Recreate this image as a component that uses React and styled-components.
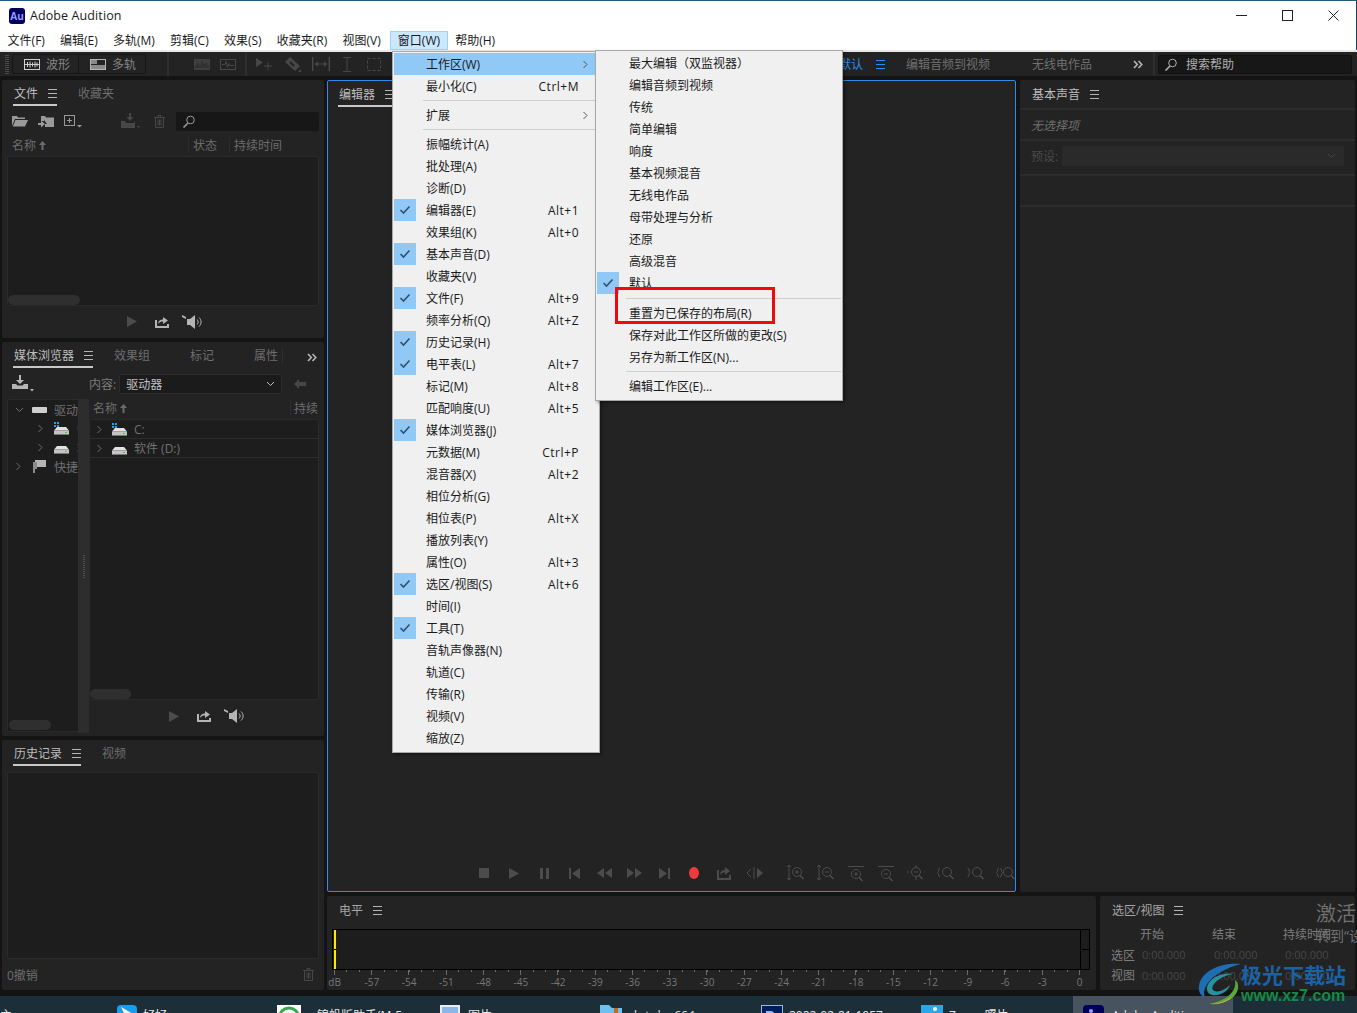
import React from 'react';
import styled, { createGlobalStyle } from 'styled-components';

const GlobalStyle = createGlobalStyle`
  html, body {
    margin: 0;
    padding: 0;
    background: #141414;
  }
  * {
    box-sizing: border-box;
  }
`;

const FONT = '"Open Sans", "Noto Sans CJK SC", sans-serif';

const Page = styled.div`
  position: relative;
  width: 1357px;
  height: 1013px;
  overflow: hidden;
  display: flex;
  flex-direction: column;
  background: #141414;
  font-family: ${FONT};
  font-size: 12px;
  color: #7d7d7d;
`;

const TitleBar = styled.div`
  height: 30px;
  flex: none;
  display: flex;
  align-items: center;
  background: #fff;
  border-top: 1px solid #1f5b7d;
  border-right: 1px solid #1b3f66;
  padding-left: 9px;
  color: #1a1a1a;
`;

const AuLogo = styled.span`
  width: 16px;
  height: 16px;
  border-radius: 3px;
  background: #00005b;
  color: #9a9aff;
  font-size: 10px;
  font-weight: 700;
  line-height: 16px;
  text-align: center;
`;

const TitleText = styled.span`
  margin-left: 5px;
  font-size: 12.5px;
  letter-spacing: 0.1px;
`;

const WinControls = styled.div`
  margin-left: auto;
  display: flex;
  align-items: center;
  color: #222;
`;

const WinButton = styled.span`
  width: 46px;
  height: 29px;
  display: flex;
  align-items: center;
  justify-content: center;
`;

const MenuBar = styled.div`
  height: 20px;
  flex: none;
  display: flex;
  align-items: flex-end;
  background: #fff;
  color: #1a1a1a;
  border-right: 1px solid #1b3f66;
`;

const MenuItem = styled.span`
  height: 19px;
  line-height: 19px;
  padding: 0 7.6px;
  margin-left: ${p => (p.$open ? 2 : 0)}px;
  background: ${p => (p.$open ? '#cce8ff' : 'transparent')};
  box-shadow: ${p => (p.$open ? 'inset 0 0 0 1px #99d1ff' : 'none')};
`;

const Toolbar = styled.div`
  height: 26px;
  flex: none;
  display: flex;
  align-items: center;
  background: #232323;
  border-top: 2px solid #e8e8e8;
  padding-left: 5px;
`;

const Grip = styled.span`
  width: 4px;
  height: 20px;
  margin-right: 3px;
  background: repeating-linear-gradient(0deg, #4a4a4a 0 1px, transparent 1px 2px);
`;

const ModeGroup = styled.div`
  display: flex;
  height: 20px;
  border: 1px solid #161616;
  border-radius: 2px;
`;

const ModeButton = styled.span`
  display: flex;
  align-items: center;
  gap: 6px;
  width: ${p => p.$w}px;
  padding-left: ${p => p.$pl}px;
  color: #858585;
  border-left: ${p => (p.$divide ? '1px solid #161616' : 'none')};
`;

const ToolSep = styled.span`
  width: ${p => p.$w || 2}px;
  height: ${p => p.$h || 24}px;
  margin: 0 ${p => p.$r || 0}px ${p => p.$b || 0}px ${p => p.$l || 0}px;
  background: #2e2e2e;
`;

const ToolSlot = styled.span`
  width: ${p => p.$w || 26}px;
  display: flex;
  justify-content: center;
  align-items: center;
  color: #474747;
`;

const WorkspaceGroup = styled.div`
  margin-left: auto;
  display: flex;
  align-items: center;
  height: 100%;
  padding-right: 5px;
`;

const Workspace = styled.span`
  margin-left: ${p => p.$ml || 0}px;
  margin-right: ${p => p.$mr}px;
  color: ${p => (p.$active ? '#2d8ceb' : '#707070')};
  white-space: nowrap;
`;

const SearchBox = styled.div`
  width: 194px;
  height: 19px;
  margin-left: 3px;
  display: flex;
  align-items: center;
  gap: 8px;
  padding-left: 5px;
  background: #171717;
  border: 1px solid #111;
  border-radius: 2px;
  color: #b0b0b0;
`;

const Body = styled.div`
  flex: 1;
  min-height: 0;
  display: flex;
  gap: 3px;
  padding: 4px 2px 6px;
`;

const LeftColumn = styled.div`
  width: 322px;
  flex: none;
  display: flex;
  flex-direction: column;
  gap: 4px;
`;

const RightArea = styled.div`
  flex: 1;
  min-width: 0;
  display: flex;
  flex-direction: column;
  gap: 4px;
`;

const Row = styled.div`
  display: flex;
  gap: 4px;
  flex: ${p => (p.$grow ? 1 : 'none')};
  min-height: 0;
  height: ${p => (p.$h ? `${p.$h}px` : 'auto')};
`;

const Panel = styled.section`
  width: ${p => (p.$w ? `${p.$w}px` : 'auto')};
  height: ${p => (p.$h ? `${p.$h}px` : 'auto')};
  flex: ${p => (p.$w || p.$h ? 'none' : 1)};
  display: flex;
  flex-direction: column;
  background: #232323;
  border-radius: 2px;
  min-width: 0;
`;

const EditorPanel = styled(Panel)`
  border: 1px solid #2d8ceb;
`;

const TabBar = styled.div`
  height: 26px;
  flex: none;
  display: flex;
  align-items: flex-end;
  padding-left: ${p => p.$pl || 11}px;
`;

const Tab = styled.span`
  height: 24px;
  display: flex;
  align-items: center;
  gap: 10px;
  padding-left: 1px;
  margin-right: ${p => p.$mr || 0}px;
  color: ${p => (p.$active ? '#bdbdbd' : '#6e6e6e')};
  border-bottom: 2px solid ${p => (p.$active ? '#c8c8c8' : 'transparent')};
  white-space: nowrap;
`;

const Burger = styled.i`
  display: block;
  width: 9px;
  height: 9px;
  flex: none;
  background: linear-gradient(
    ${p => p.$color || '#b5b5b5'} 0 1px,
    transparent 1px 4px,
    ${p => p.$color || '#b5b5b5'} 4px 5px,
    transparent 5px 8px,
    ${p => p.$color || '#b5b5b5'} 8px 9px
  );
`;

const FileTools = styled.div`
  height: 30px;
  flex: none;
  display: flex;
  align-items: center;
  padding-left: 10px;
  color: #9a9a9a;
`;

const IconSlot = styled.span`
  width: ${p => p.$w}px;
  flex: none;
  display: flex;
  align-items: center;
  justify-content: ${p => (p.$end ? 'flex-end' : 'flex-start')};
  margin: ${p => p.$m || 0};
  color: ${p => p.$color || 'inherit'};
`;

const SearchField = styled.div`
  width: 143px;
  height: 19px;
  display: flex;
  align-items: center;
  padding-left: 6px;
  background: #171717;
  border-radius: 2px;
  color: #999;
`;

const ListHeader = styled.div`
  height: 20px;
  flex: none;
  display: flex;
  align-items: center;
  padding: 0 0 2px ${p => p.$pl || 10}px;
  color: #6c6c6c;
`;

const HeaderCell = styled.span`
  width: ${p => (p.$w ? `${p.$w}px` : 'auto')};
  display: flex;
  align-items: center;
  gap: 3px;
  height: 16px;
  padding-left: ${p => p.$pl || 0}px;
  border-left: ${p => (p.$divide ? '1px solid #2c2c2c' : 'none')};
  white-space: nowrap;
`;

const ListBox = styled.div`
  margin: ${p => p.$m || '0 5px'};
  height: ${p => (p.$h ? `${p.$h}px` : 'auto')};
  flex: ${p => (p.$h ? 'none' : 1)};
  display: flex;
  flex-direction: column;
  background: #1d1d1d;
  border: 1px solid #2a2a2a;
  border-radius: 2px;
  overflow: hidden;
`;

const Thumb = styled.span`
  display: block;
  width: ${p => p.$w}px;
  height: 10px;
  flex: none;
  margin: auto 0 0;
  border-radius: 5px;
  background: #2f2f2f;
`;

const TransportMini = styled.div`
  height: ${p => p.$h || 32}px;
  flex: none;
  display: flex;
  align-items: center;
  justify-content: center;
  padding: 0 0 1px ${p => p.$pl || 0}px;
  color: #b5b5b5;
`;

const ContentRow = styled.div`
  height: 31px;
  flex: none;
  display: flex;
  align-items: center;
  padding-left: 10px;
  color: #7d7d7d;
  white-space: nowrap;
`;

const SelectBox = styled.div`
  width: ${p => p.$w}px;
  height: 20px;
  flex: none;
  margin-left: 3px;
  padding: 0 6px;
  display: flex;
  align-items: center;
  justify-content: space-between;
  background: #1b1b1b;
  border: 1px solid #2b2b2b;
  border-radius: 2px;
  color: #c0c0c0;
`;

const MediaBody = styled.div`
  height: 334px;
  display: flex;
  flex: none;
`;

const TreePane = styled.div`
  width: 71px;
  margin: 0 0 1px 5px;
  flex: none;
  display: flex;
  flex-direction: column;
  background: #1d1d1d;
  border: 1px solid #2a2a2a;
  border-right: none;
  border-radius: 2px 0 0 2px;
  overflow: hidden;
`;

const TreeRow = styled.div`
  height: 19px;
  flex: none;
  display: flex;
  align-items: center;
  padding-left: ${p => p.$pl}px;
  color: #6e6e6e;
  white-space: nowrap;
`;

const TreeThumb = styled(Thumb)`
  margin: auto 0 1px 1px;
`;

const Splitter = styled.div`
  width: 11px;
  flex: none;
  display: flex;
  align-items: center;
  justify-content: center;
  background: #2d2d2d;
`;

const SplitGrip = styled.span`
  width: 2px;
  height: 24px;
  background: repeating-linear-gradient(0deg, #4c4c4c 0 1px, transparent 1px 2px);
`;

const MediaContent = styled.div`
  flex: 1;
  min-width: 0;
  display: flex;
  flex-direction: column;
`;

const DriveRow = styled.div`
  height: 19px;
  flex: none;
  display: flex;
  align-items: center;
  padding-left: 6px;
  color: #707070;
  border-bottom: 1px solid #2c2c2c;
`;

const HistoryFooter = styled.div`
  height: 31px;
  flex: none;
  display: flex;
  align-items: center;
  justify-content: space-between;
  padding: 0 10px 0 5px;
  color: #6e6e6e;
`;

const EditorBody = styled.div`
  flex: 1;
`;

const EditorTransport = styled.div`
  height: 24px;
  flex: none;
  margin-bottom: 6px;
  display: flex;
  align-items: center;
  padding-left: 10px;
  color: #4c4c4c;
`;

const Dash = styled.span`
  width: 4px;
  height: 1px;
  margin: 7px 131px 0 0;
  background: #5a5a5a;
`;

const TransSlot = styled.span`
  width: ${p => p.$w || 30}px;
  flex: none;
  display: flex;
  justify-content: center;
  color: ${p => p.$color || 'inherit'};
`;

const SoundTitle = styled.div`
  height: 28px;
  flex: none;
  display: flex;
  align-items: center;
  gap: 10px;
  padding-left: 12px;
  color: #bdbdbd;
`;

const SoundRow = styled.div`
  height: ${p => p.$h}px;
  flex: none;
  display: flex;
  align-items: center;
  gap: 4px;
  padding: 0 11px ${p => p.$pb || 0}px;
  border-top: 2px solid #2c2c2c;
  color: ${p => p.$color || '#4a4a4a'};
  font-style: ${p => (p.$italic ? 'italic' : 'normal')};
`;

const PresetBox = styled.div`
  flex: 1;
  height: 20px;
  padding-right: 8px;
  display: flex;
  align-items: center;
  justify-content: flex-end;
  background: #2a2a2a;
  border-radius: 2px;
  color: #444;
`;

const LevelHeader = styled.div`
  height: 28px;
  flex: none;
  display: flex;
  align-items: center;
  gap: 10px;
  padding-left: 12px;
  color: #a5a5a5;
`;

const Meter = styled.div`
  height: 41px;
  margin: 5px 6px 0 5px;
  flex: none;
  display: grid;
  grid-template-columns: 2px 1fr 9px;
  padding-left: 1px;
  background: #1d1d1d;
  border: 1px solid #000;
`;

const PeakLine = styled.span`
  background: linear-gradient(#ffe800 0 19px, #000 19px 20px, #ffe800 20px);
`;

const MeterSide = styled.span`
  grid-column: 3;
  border-left: 1px solid #000;
  background: linear-gradient(transparent 0 19px, #000 19px 20px, transparent 20px);
`;

const Ticks = styled.div`
  height: 5px;
  margin: 0 10px 0 7px;
  flex: none;
  background:
    repeating-linear-gradient(90deg, #6a6a6a 0 1px, transparent 1px 12.417px) 0 0 / 100% 2px no-repeat,
    repeating-linear-gradient(90deg, #6a6a6a 0 1px, transparent 1px 37.25px) 0 0 / 100% 5px no-repeat;
`;

const ScaleRow = styled.div`
  display: flex;
  margin: 0 0 0 -18px;
  padding-left: 7px;
  color: #777;
  font-size: 10px;
  line-height: 14px;
`;

const ScaleLabel = styled.span`
  width: 37.25px;
  flex: none;
  text-align: center;
`;

const SelectionGrid = styled.div`
  display: grid;
  grid-template-columns: 29px 72px 71px 71px;
  grid-auto-rows: 20.5px;
  align-items: center;
  padding-left: 11px;
  color: #7d7d7d;
  white-space: nowrap;
`;

const TimeValue = styled.span`
  padding-left: 2px;
  font-size: 11px;
  color: #464646;
`;

const Taskbar = styled.div`
  height: 17px;
  flex: none;
  display: flex;
  background: #1c2f38;
  overflow: hidden;
  color: #e6e6e6;
`;

const TaskEdge = styled.span`
  width: 107px;
  flex: none;
  padding-top: 13px;
  line-height: 14px;
`;

const TaskItem = styled.div`
  width: ${p => p.$w}px;
  flex: none;
  display: flex;
  align-items: flex-start;
  gap: ${p => p.$gap || 6}px;
  padding: 9px 0 0 10px;
  background: ${p => (p.$active ? '#47545f' : 'transparent')};
  white-space: nowrap;
`;

const TaskLabel = styled.span`
  line-height: 14px;
  margin-top: 4px;
`;

const DropMenu = styled.div`
  position: absolute;
  left: ${p => p.$x}px;
  top: ${p => p.$y}px;
  width: ${p => p.$w}px;
  padding: ${p => p.$pt}px 1px 3px;
  background: #f0f0f0;
  border: 1px solid #a8a8a8;
  box-shadow: 2px 2px 3px rgba(0, 0, 0, 0.35);
  color: #1a1a1a;
`;

const MenuRow = styled.div`
  height: 22px;
  display: flex;
  align-items: center;
  padding-right: 19px;
  background: ${p => (p.$hi ? '#90c8f6' : 'transparent')};
  white-space: nowrap;
`;

const CheckCell = styled.span`
  width: 22px;
  height: 22px;
  flex: none;
  display: flex;
  align-items: center;
  justify-content: center;
  margin-right: ${p => p.$mr}px;
  background: ${p => (p.$on ? '#90c8f6' : 'transparent')};
  color: #33516e;
`;

const Shortcut = styled.span`
  margin-left: auto;
  letter-spacing: 0.5px;
`;

const Caret = styled.span`
  margin-left: auto;
  margin-right: -10px;
  display: flex;
  color: #555;
`;

const MenuSep = styled.div`
  height: ${p => p.$h || 7}px;
  display: flex;
  align-items: center;
  padding-left: ${p => p.$pl}px;
  &::after {
    content: '';
    flex: 1;
    height: 1px;
    background: #cfcfcf;
  }
`;

const RedBox = styled.div`
  position: absolute;
  left: 615px;
  top: 287px;
  width: 160px;
  height: 37px;
  border: 3px solid #ee0a0a;
`;

const ActivateText = styled.div`
  position: absolute;
  left: 1316px;
  top: ${p => p.$y}px;
  font-size: ${p => p.$size}px;
  line-height: 1.2;
  color: #707070;
  white-space: nowrap;
`;

const SiteName = styled.div`
  position: absolute;
  left: 1241px;
  top: 961px;
  font-size: 21px;
  line-height: 28px;
  font-weight: 700;
  color: #1a62a6;
  white-space: nowrap;
`;

const SiteUrl = styled.div`
  position: absolute;
  left: 1241px;
  top: 985px;
  font-family: "Liberation Sans", sans-serif;
  font-size: 16px;
  line-height: 22px;
  font-weight: 700;
  color: #158a46;
  white-space: nowrap;
`;

const SiteLogo = styled.svg`
  position: absolute;
  left: 1197px;
  top: 962px;
`;

const IconSvg = styled.svg`
  display: block;
  flex: none;
`;

const Ic = ({ w = 16, h = 16, children }) => (
  <IconSvg width={w} height={h} viewBox={`0 0 ${w} ${h}`} fill="currentColor">
    {children}
  </IconSvg>
);

const Line = ({ d, sw = 1 }) => <path d={d} fill="none" stroke="currentColor" strokeWidth={sw} />;

const ChevRight = () => (
  <Ic w={7} h={9}><Line d="M1.5 1l3.5 3.5L1.5 8" /></Ic>
);
const ChevDown = () => (
  <Ic w={9} h={6}><Line d="M1 1l3.5 3.5L8 1" /></Ic>
);
const CheckMark = () => (
  <Ic w={12} h={10}><Line d="M1.5 5l3 3L10.5 1.5" sw={1.6} /></Ic>
);
const DoubleChev = () => (
  <Ic w={10} h={9}><Line d="M1 1l3.3 3.5L1 8M5.5 1l3.3 3.5L5.5 8" sw={1.6} /></Ic>
);
const SearchIcon = () => (
  <Ic w={14} h={13}>
    <circle cx="8.5" cy="5" r="3.8" fill="none" stroke="currentColor" />
    <path d="M6 8L1.5 12.5" stroke="currentColor" strokeWidth="1.6" />
  </Ic>
);
const WaveBox = () => (
  <Ic w={16} h={11}>
    <rect x=".5" y=".5" width="15" height="10" fill="none" stroke="#cfcfcf" />
    <path d="M1 5.5h14M3.5 3v5M6 2.5v6M8.5 3.5v4M11 2.5v6M13 3.5v4" stroke="#cfcfcf" />
  </Ic>
);
const TrackBox = () => (
  <Ic w={16} h={11}>
    <rect x=".5" y=".5" width="15" height="10" fill="none" stroke="#b5b5b5" />
    <path d="M1 1h6v4H1zM1 6h14v4H1z" fill="#8a8a8a" />
  </Ic>
);
const SpectrumBox = () => (
  <Ic w={16} h={11}>
    <rect width="16" height="11" fill="#3e3e3e" />
    <path d="M2 9V6M4 9V4M6 9V6M8 9V2M10 9V5M12 9V4M14 9V6" stroke="#262626" />
  </Ic>
);
const WaveOutline = () => (
  <Ic w={16} h={11}>
    <rect x=".5" y=".5" width="15" height="10" fill="none" stroke="currentColor" />
    <Line d="M2 5.5h3l1-3 1.5 6 1.5-4 1 2h4" />
  </Ic>
);
const MoveTool = () => (
  <Ic w={18} h={14}>
    <path d="M1 1l7 4.5L1 10z" />
    <Line d="M13 5v8M9 9h8" />
  </Ic>
);
const RazorTool = () => (
  <Ic w={18} h={16}>
    <path d="M1 6l5-5 10 9-5 5z" />
    <path d="M6 6l4 4" stroke="#232323" strokeWidth="2" />
    <path d="M17 13v3h-3z" />
  </Ic>
);
const SlipTool = () => (
  <Ic w={20} h={14}>
    <path d="M1 0h1.500v14H1zM17.500 0H19v14h-1.500z" />
    <Line d="M4 7h12" />
    <path d="M4 7l3-3v6zM16 7l-3-3v6z" />
  </Ic>
);
const BeamTool = () => (
  <Ic w={10} h={15}><Line d="M1 .5h8M1 14.500h8M5 .5v14" /></Ic>
);
const MarqueeTool = () => (
  <Ic w={14} h={13}>
    <rect x=".5" y=".5" width="13" height="12" fill="none" stroke="currentColor" strokeDasharray="3 2" />
  </Ic>
);
const FolderOpen = () => (
  <Ic w={16} h={12}>
    <path d="M0 1h5l1 1.500h7V4H3L0 11z" />
    <path d="M3.500 5H16l-3 6.500H.8z" />
  </Ic>
);
const FolderImport = () => (
  <Ic w={16} h={13}>
    <path d="M3 1h4l1 1.500h8V12H7V9h2l-3-4v1H3z" />
    <path d="M0 8h3V5.500L7 9l-4 3.500V10H0z" />
  </Ic>
);
const NewBox = () => (
  <Ic w={18} h={13}>
    <rect x=".5" y=".5" width="10" height="10" fill="none" stroke="currentColor" />
    <Line d="M3 5.500h5M5.500 3v5" />
    <path d="M13 10h5l-2.500 2.500z" />
  </Ic>
);
const ImportDim = () => (
  <Ic w={20} h={16}>
    <path d="M9 0h2v4h2.500L10 8 6.500 4H9z" />
    <path d="M1 8h4l1 2h8l1-2V15H1z" />
    <path d="M17 13h3l-1.500 2z" />
  </Ic>
);
const TrashIcon = () => (
  <Ic w={11} h={13}>
    <Line d="M0 2.500h11M4 2.500V.5h3v2M1.500 2.500v10h8v-10M4 4.500v6M5.500 4.500v6M7 4.500v6" />
  </Ic>
);
const PlayIcon = () => (
  <Ic w={10} h={11}><path d="M0 0l10 5.500L0 11z" /></Ic>
);
const ExportIcon = () => (
  <Ic w={14} h={12}>
    <path d="M0 4h2v6h10V8h2v4H0z" />
    <path d="M3 8c0-3 2-4.500 5-4.500V1l5 3.500L8 8V5.500C6 5.500 4.500 6 3 8z" />
  </Ic>
);
const SpeakerIcon = () => (
  <Ic w={21} h={14}>
    <path d="M0 0l4 2v2L0 2z" />
    <path d="M5 4h3l5-4v14L8 10H5z" />
    <Line d="M15 4.500c1.500 1.500 1.500 3.500 0 5M17 2.500c2.800 2.800 2.800 6.200 0 9" />
  </Ic>
);
const UpArrow = () => (
  <Ic w={7} h={9}><path d="M3.500 0L7 4H4.500v5h-2V4H0z" /></Ic>
);
const ImportTool = () => (
  <Ic w={22} h={17}>
    <path d="M7 0h2v5h3L8 9 4 5h3z" />
    <path d="M0 9h4l1.500 1.500h5L12 9h4v5H0z" />
    <path d="M18 14h4l-2 2.500z" />
  </Ic>
);
const BackArrow = () => (
  <Ic w={12} h={10}><path d="M0 5l5-5v3h7v4H5v3z" /></Ic>
);
const HardDrive = ({ win }) => (
  <Ic w={15} h={13}>
    {win && <path d="M0 0h2v2H0zM3 0h2v2H3zM0 3h2v2H0zM3 3h2v2H3z" fill="#1aa6ea" />}
    <path d="M3 5h9l3 3.500H0z" fill="#e2e2e2" />
    <rect y="8.500" width="15" height="4.500" fill="#c4c4c4" />
    <rect y="12" width="15" height="1" fill="#777" />
    <rect x="11" y="10" width="2" height="1" fill="#57c24a" />
  </Ic>
);
const DriveBar = () => <Ic w={15} h={6}><rect width="15" height="6" rx="1" fill="#cfcfcf" /></Ic>;
const ShortcutIcon = () => (
  <Ic w={13} h={13}>
    <rect x="2" y="0" width="11" height="7" fill="#b5b5b5" />
    <path d="M0 2h4v7H2v4H0z" fill="#8a8a8a" />
  </Ic>
);

const TransportIcons = {
  stop: <Ic w={10} h={10}><rect width="10" height="10" /></Ic>,
  play: <Ic w={10} h={11}><path d="M0 0l10 5.500L0 11z" /></Ic>,
  pause: <Ic w={9} h={11}><path d="M0 0h3v11H0zM6 0h3v11H6z" /></Ic>,
  prev: <Ic w={11} h={11}><path d="M0 0h2v11H0zM11 0v11L3 5.500z" /></Ic>,
  rew: <Ic w={15} h={10}><path d="M7 0v10L0 5zM15 0v10L8 5z" /></Ic>,
  ff: <Ic w={15} h={10}><path d="M0 0v10l7-5zM8 0v10l7-5z" /></Ic>,
  next: <Ic w={11} h={11}><path d="M11 0H9v11h2zM0 0v11l8-5.500z" /></Ic>,
  record: <Ic w={10} h={12}><ellipse cx="5" cy="6" rx="5" ry="6" fill="#ed3b3b" /></Ic>,
  export: <Ic w={14} h={14}><path d="M0 4h2v8h10V9h2v5H0z" /><path d="M3 9c0-3 2-5 5-5V1l5 4-5 4V6.500C6 6.500 4.500 7 3 9z" /></Ic>,
  skip: (
    <Ic w={17} h={12}>
      <path d="M11 1l6 5-6 5z" />
      <Line d="M8 0v12M5 2L1 6l4 4" />
    </Ic>
  ),
};

const Lens = ({ sign }) => (
  <>
    <circle cx="10" cy="7" r="4.500" fill="none" stroke="currentColor" />
    {sign !== 'none' && <path d="M8 7h4" stroke="currentColor" />}
    {sign === 'plus' && <path d="M10 5v4" stroke="currentColor" />}
    <path d="M13 10.500l3.500 3.500" stroke="currentColor" strokeWidth="1.600" />
  </>
);

const ZoomIcons = [
  <Ic w={18} h={16} key="a"><Line d="M2 0v15M0 2l2-2 2 2M0 13l2 2 2-2" /><Lens sign="plus" /></Ic>,
  <Ic w={18} h={16} key="b"><Line d="M2 0v15M0 2l2-2 2 2M0 13l2 2 2-2" /><Lens sign="minus" /></Ic>,
  <Ic w={18} h={17} key="c"><Line d="M1 1.500h16" /><g transform="translate(-1 2)"><Lens sign="plus" /></g></Ic>,
  <Ic w={18} h={17} key="d"><Line d="M1 1.500h16" /><g transform="translate(-1 2)"><Lens sign="minus" /></g></Ic>,
  <Ic w={18} h={17} key="e"><Line d="M2 7h-2M17 7h1M9 0v2M9 12v3" /><g transform="translate(-1 0)"><Lens sign="minus" /></g></Ic>,
  <Ic w={18} h={16} key="f"><Line d="M3 3C1 3 2 7 .5 7.500 2 8 1 12 3 12" /><Lens sign="none" /></Ic>,
  <Ic w={18} h={16} key="g"><Line d="M.5 3c2 0 1 4 2.500 4.500C1.500 8 2.500 12 .5 12" /><Lens sign="none" /></Ic>,
  <Ic w={20} h={16} key="h"><Line d="M3 3C1 3 2 7 .5 7.500 2 8 1 12 3 12M4 3c2 0 1 4 2.500 4.500C5 8 6 12 4 12" /><g transform="translate(2 0)"><Lens sign="none" /></g></Ic>,
];

const mainMenu = [
  { label: '工作区(W)', sub: true, hi: true },
  { label: '最小化(C)', key: 'Ctrl+M' },
  { sep: true },
  { label: '扩展', sub: true },
  { sep: true },
  { label: '振幅统计(A)' },
  { label: '批处理(A)' },
  { label: '诊断(D)' },
  { label: '编辑器(E)', key: 'Alt+1', on: true },
  { label: '效果组(K)', key: 'Alt+0' },
  { label: '基本声音(D)', on: true },
  { label: '收藏夹(V)' },
  { label: '文件(F)', key: 'Alt+9', on: true },
  { label: '频率分析(Q)', key: 'Alt+Z' },
  { label: '历史记录(H)', on: true },
  { label: '电平表(L)', key: 'Alt+7', on: true },
  { label: '标记(M)', key: 'Alt+8' },
  { label: '匹配响度(U)', key: 'Alt+5' },
  { label: '媒体浏览器(J)', on: true },
  { label: '元数据(M)', key: 'Ctrl+P' },
  { label: '混音器(X)', key: 'Alt+2' },
  { label: '相位分析(G)' },
  { label: '相位表(P)', key: 'Alt+X' },
  { label: '播放列表(Y)' },
  { label: '属性(O)', key: 'Alt+3' },
  { label: '选区/视图(S)', key: 'Alt+6', on: true },
  { label: '时间(I)' },
  { label: '工具(T)', on: true },
  { label: '音轨声像器(N)' },
  { label: '轨道(C)' },
  { label: '传输(R)' },
  { label: '视频(V)' },
  { label: '缩放(Z)' },
];

const workspaceMenu = [
  { label: '最大编辑（双监视器）' },
  { label: '编辑音频到视频' },
  { label: '传统' },
  { label: '简单编辑' },
  { label: '响度' },
  { label: '基本视频混音' },
  { label: '无线电作品' },
  { label: '母带处理与分析' },
  { label: '还原' },
  { label: '高级混音' },
  { label: '默认', on: true },
  { sep: true, h: 8 },
  { label: '重置为已保存的布局(R)' },
  { label: '保存对此工作区所做的更改(S)' },
  { label: '另存为新工作区(N)...' },
  { sep: true },
  { label: '编辑工作区(E)...' },
];

const menuBarItems = ['文件(F)', '编辑(E)', '多轨(M)', '剪辑(C)', '效果(S)', '收藏夹(R)', '视图(V)'];

const scale = ['dB', '-57', '-54', '-51', '-48', '-45', '-42', '-39', '-36', '-33', '-30', '-27', '-24', '-21', '-18', '-15', '-12', '-9', '-6', '-3', '0'];

const MenuList = ({ items, gutter, sepPad }) =>
  items.map((item, i) =>
    item.sep ? (
      <MenuSep key={i} $h={item.h} $pl={sepPad} />
    ) : (
      <MenuRow key={i} $hi={item.hi}>
        <CheckCell $on={item.on} $mr={gutter}>{item.on && <CheckMark />}</CheckCell>
        {item.label}
        {item.key && <Shortcut>{item.key}</Shortcut>}
        {item.sub && <Caret><ChevRight /></Caret>}
      </MenuRow>
    ),
  );

const MiniTransport = ({ h, pl }) => (
  <TransportMini $h={h} $pl={pl}>
    <IconSlot $w={28} $color="#4c4c4c"><PlayIcon /></IconSlot>
    <IconSlot $w={27}><ExportIcon /></IconSlot>
    <SpeakerIcon />
  </TransportMini>
);

export default function App() {
  return (
    <Page>
      <GlobalStyle />
      <TitleBar>
        <AuLogo>Au</AuLogo>
        <TitleText>Adobe Audition</TitleText>
        <WinControls>
          <WinButton><Ic w={11} h={11}><path d="M0 5h11v1H0z" /></Ic></WinButton>
          <WinButton><Ic w={11} h={11}><rect x=".5" y=".5" width="10" height="10" fill="none" stroke="currentColor" /></Ic></WinButton>
          <WinButton><Ic w={11} h={11}><Line d="M.5.5l10 10M10.500.5l-10 10" /></Ic></WinButton>
        </WinControls>
      </TitleBar>

      <MenuBar>
        {menuBarItems.map(label => (
          <MenuItem key={label}>{label}</MenuItem>
        ))}
        <MenuItem $open>窗口(W)</MenuItem>
        <MenuItem>帮助(H)</MenuItem>
      </MenuBar>

      <Toolbar>
        <Grip />
        <ModeGroup>
          <ModeButton $w={65} $pl={11}><WaveBox />波形</ModeButton>
          <ModeButton $w={67} $pl={11} $divide><TrackBox />多轨</ModeButton>
        </ModeGroup>
        <ToolSep $l={21} $r={20} />
        <ToolSlot><SpectrumBox /></ToolSlot>
        <ToolSlot><WaveOutline /></ToolSlot>
        <ToolSep $l={4} $r={3} />
        <ToolSlot $w={28}><MoveTool /></ToolSlot>
        <ToolSlot $w={29}><RazorTool /></ToolSlot>
        <ToolSlot $w={28}><SlipTool /></ToolSlot>
        <ToolSlot $w={24}><BeamTool /></ToolSlot>
        <ToolSlot $w={30}><MarqueeTool /></ToolSlot>
        <WorkspaceGroup>
          <Workspace $active $mr={13}>默认</Workspace>
          <Burger $color="#2d8ceb" />
          <Workspace $ml={21} $mr={42}>编辑音频到视频</Workspace>
          <Workspace $mr={41}>无线电作品</Workspace>
          <IconSlot $w={20} $color="#b5b5b5"><DoubleChev /></IconSlot>
          <ToolSep />
          <SearchBox><SearchIcon />搜索帮助</SearchBox>
        </WorkspaceGroup>
      </Toolbar>

      <Body>
        <LeftColumn>
          <Panel $h={258}>
            <TabBar>
              <Tab $active $mr={20}>文件<Burger /></Tab>
              <Tab>收藏夹</Tab>
            </TabBar>
            <FileTools>
              <IconSlot $w={26}><FolderOpen /></IconSlot>
              <IconSlot $w={26}><FolderImport /></IconSlot>
              <IconSlot $w={56}><NewBox /></IconSlot>
              <IconSlot $w={34} $color="#474747"><ImportDim /></IconSlot>
              <IconSlot $w={22} $color="#474747"><TrashIcon /></IconSlot>
              <SearchField><SearchIcon /></SearchField>
            </FileTools>
            <ListHeader>
              <HeaderCell $w={176}>名称<UpArrow /></HeaderCell>
              <HeaderCell $w={41} $divide $pl={4}>状态</HeaderCell>
              <HeaderCell $divide $pl={4}>持续时间</HeaderCell>
            </ListHeader>
            <ListBox $h={150}>
              <Thumb $w={72} />
            </ListBox>
            <MiniTransport pl={3} />
          </Panel>

          <Panel $h={394}>
            <TabBar>
              <Tab $active $mr={20}>媒体浏览器<Burger /></Tab>
              <Tab $mr={39}>效果组</Tab>
              <Tab $mr={39}>标记</Tab>
              <Tab $mr={4}>属性</Tab>
              <ToolSep $w={1} $h={16} $b={4} />
              <IconSlot $w={34} $end $color="#b5b5b5" $m="0 0 6px"><DoubleChev /></IconSlot>
            </TabBar>
            <ContentRow>
              <IconSlot $w={77} $color="#b5b5b5"><ImportTool /></IconSlot>
              内容:
              <SelectBox $w={163}>驱动器<ChevDown /></SelectBox>
              <IconSlot $w={30} $color="#474747" $m="0 0 0 12px"><BackArrow /></IconSlot>
            </ContentRow>
            <MediaBody>
              <TreePane>
                <TreeRow $pl={7}>
                  <IconSlot $w={17}><ChevDown /></IconSlot>
                  <IconSlot $w={22}><DriveBar /></IconSlot>
                  驱动器
                </TreeRow>
                <TreeRow $pl={29}>
                  <IconSlot $w={17}><ChevRight /></IconSlot>
                  <IconSlot $w={23}><HardDrive win /></IconSlot>
                  C:
                </TreeRow>
                <TreeRow $pl={29}>
                  <IconSlot $w={17}><ChevRight /></IconSlot>
                  <IconSlot $w={23}><HardDrive /></IconSlot>
                  软件
                </TreeRow>
                <TreeRow $pl={7}>
                  <IconSlot $w={18}><ChevRight /></IconSlot>
                  <IconSlot $w={21}><ShortcutIcon /></IconSlot>
                  快捷
                </TreeRow>
                <TreeThumb $w={42} />
              </TreePane>
              <Splitter><SplitGrip /></Splitter>
              <MediaContent>
                <ListHeader $pl={4}>
                  <HeaderCell $w={197}>名称<UpArrow /></HeaderCell>
                  <HeaderCell $divide $pl={3}>持续</HeaderCell>
                </ListHeader>
                <ListBox $h={281} $m="0 5px 0 0">
                  <DriveRow>
                    <IconSlot $w={16}><ChevRight /></IconSlot>
                    <IconSlot $w={22}><HardDrive win /></IconSlot>
                    C:
                  </DriveRow>
                  <DriveRow>
                    <IconSlot $w={16}><ChevRight /></IconSlot>
                    <IconSlot $w={22}><HardDrive /></IconSlot>
                    软件 (D:)
                  </DriveRow>
                  <Thumb $w={41} />
                </ListBox>
                <MiniTransport h={33} />
              </MediaContent>
            </MediaBody>
          </Panel>

          <Panel $h={250}>
            <TabBar>
              <Tab $active $mr={20}>历史记录<Burger /></Tab>
              <Tab>视频</Tab>
            </TabBar>
            <ListBox $m="6px 5px 0" $h={187} />
            <HistoryFooter>
              0撤销
              <IconSlot $w={11} $color="#474747"><TrashIcon /></IconSlot>
            </HistoryFooter>
          </Panel>
        </LeftColumn>

        <RightArea>
          <Row $grow>
            <EditorPanel $w={689}>
              <TabBar $pl={10}>
                <Tab $active>编辑器<Burger /></Tab>
              </TabBar>
              <EditorBody />
              <EditorTransport>
                <Dash />
                {Object.entries(TransportIcons).map(([name, icon]) => (
                  <TransSlot key={name} $color={name === 'record' ? '#ed3b3b' : undefined}>{icon}</TransSlot>
                ))}
                <TransSlot $w={12} />
                {ZoomIcons.map((icon, i) => <TransSlot key={i}>{icon}</TransSlot>)}
              </EditorTransport>
            </EditorPanel>
            <Panel>
              <SoundTitle>基本声音<Burger /></SoundTitle>
              <SoundRow $h={31} $italic $color="#6e6e6e">无选择项</SoundRow>
              <SoundRow $h={35} $pb={3}>预设:<PresetBox><ChevDown /></PresetBox></SoundRow>
              <SoundRow $h={31} />
              <SoundRow $h={2} />
            </Panel>
          </Row>
          <Row $h={94}>
            <Panel $w={769}>
              <LevelHeader>电平<Burger /></LevelHeader>
              <Meter>
                <PeakLine />
                <MeterSide />
              </Meter>
              <Ticks />
              <ScaleRow>
                {scale.map(s => <ScaleLabel key={s}>{s}</ScaleLabel>)}
              </ScaleRow>
            </Panel>
            <Panel>
              <LevelHeader>选区/视图<Burger /></LevelHeader>
              <SelectionGrid>
                <span />
                <span>开始</span>
                <span>结束</span>
                <span>持续时间</span>
                <span>选区</span>
                <TimeValue>0:00.000</TimeValue>
                <TimeValue>0:00.000</TimeValue>
                <TimeValue>0:00.000</TimeValue>
                <span>视图</span>
                <TimeValue>0:00.000</TimeValue>
                <TimeValue>0:00.000</TimeValue>
                <TimeValue>0:00.000</TimeValue>
              </SelectionGrid>
            </Panel>
          </Row>
        </RightArea>
      </Body>

      <Taskbar>
        <TaskEdge>主</TaskEdge>
        <TaskItem $w={160} $gap={6}>
          <Ic w={20} h={20}><rect width="20" height="20" rx="4" fill="#1c9cf0" /><path d="M4 2l12 7-7 3z" fill="#fff" /></Ic>
          <TaskLabel>好好</TaskLabel>
        </TaskItem>
        <TaskItem $w={163} $gap={16}>
          <Ic w={24} h={20}><rect width="24" height="20" fill="#fff" /><ellipse cx="12" cy="11" rx="9" ry="8" fill="none" stroke="#35a84a" strokeWidth="3" /></Ic>
          <TaskLabel>锦帆版助手(M-5</TaskLabel>
        </TaskItem>
        <TaskItem $w={160} $gap={8}>
          <Ic w={20} h={20}><rect width="20" height="20" fill="#e8eef5" /><rect x="2" y="2" width="16" height="14" fill="#8ab6e8" /></Ic>
          <TaskLabel>图片</TaskLabel>
        </TaskItem>
        <TaskItem $w={161} $gap={12}>
          <Ic w={22} h={20}><path d="M0 0h9l3 3h10v17H0z" fill="#6cc1ee" /><rect x="14" y="3" width="4" height="17" fill="#c06a1f" /></Ic>
          <TaskLabel>b-t-d-c-664</TaskLabel>
        </TaskItem>
        <TaskItem $w={160} $gap={6}>
          <Ic w={22} h={20}><rect width="22" height="20" fill="#9bb7e0" /><rect x="1" y="1" width="20" height="18" fill="#001d5c" /><path d="M5 6h5a2 2 0 010 6H7v4H5z" fill="#8db9ff" /></Ic>
          <TaskLabel>2022-02-21-1057</TaskLabel>
        </TaskItem>
        <TaskItem $w={162} $gap={6}>
          <Ic w={22} h={20}><rect width="22" height="20" fill="#2aa7e6" /><circle cx="14" cy="4" r="2" fill="#fff" /></Ic>
          <TaskLabel>Zoom 照片</TaskLabel>
        </TaskItem>
        <TaskItem $w={160} $gap={8} $active>
          <Ic w={21} h={20}><rect width="21" height="20" rx="4" fill="#00005b" /><circle cx="8" cy="6" r="2" fill="#9a9aff" /></Ic>
          <TaskLabel>Adobe Audition</TaskLabel>
        </TaskItem>
      </Taskbar>

      <DropMenu $x={392} $y={51} $w={208} $pt={1}>
        <MenuList items={mainMenu} gutter={10} sepPad={29} />
      </DropMenu>
      <DropMenu $x={595} $y={50} $w={248} $pt={1}>
        <MenuList items={workspaceMenu} gutter={10} sepPad={29} />
      </DropMenu>
      <RedBox />

      <ActivateText $y={902} $size={20}>激活</ActivateText>
      <ActivateText $y={928} $size={14}>转到“设</ActivateText>
      <SiteLogo width="46" height="44" viewBox="0 0 46 44">
        <path d="M44 2C26 0 4 8 2 24c-1 6 2 10 6 11C4 26 14 10 44 2z" fill="#1c6fb5" />
        <path d="M36 12C22 10 10 18 10 27c0 5 5 7 10 6 7-1 12-6 13-10-6 6-14 8-17 5-3-4 6-14 20-16z" fill="#2a8f9f" />
        <path d="M38 18c2 10-6 20-26 24 14 1 30-6 29-18 0-3-1-5-3-6z" fill="#5aa83a" />
        <path d="M12 42c8 0 18-3 24-8-4 5-12 9-24 8z" fill="#c9b23a" />
      </SiteLogo>
      <SiteName>极光下载站</SiteName>
      <SiteUrl>www.xz7.com</SiteUrl>
    </Page>
  );
}
